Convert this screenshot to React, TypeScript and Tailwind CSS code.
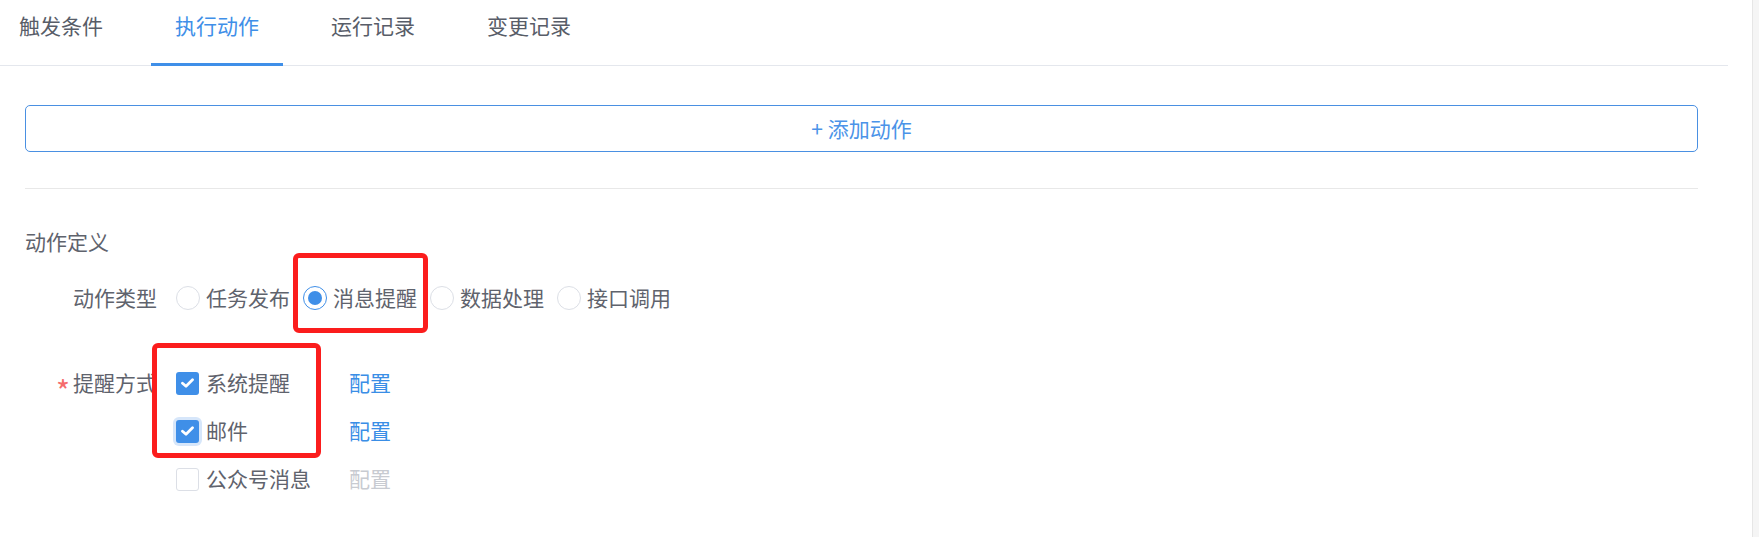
import { useState } from "react";

const tabs = ["触发条件", "执行动作", "运行记录", "变更记录"];
const actionTypes = ["任务发布", "消息提醒", "数据处理", "接口调用"];

function Radio({ label, checked }: { label: string; checked: boolean }) {
  return (
    <label className="mr-[13px] flex items-center">
      <span
        className={
          checked
            ? "flex h-[24px] w-[24px] items-center justify-center rounded-full border border-[#3f8fe8] bg-white"
            : "h-[24px] w-[24px] rounded-full border border-[#dcdfe6] bg-white"
        }
      >
        {checked && <span className="h-[14px] w-[14px] rounded-full bg-[#3f8fe8]" />}
      </span>
      <span className="ml-[6px] text-[#5f636d]">{label}</span>
    </label>
  );
}

function Check({ checked, focused }: { checked: boolean; focused?: boolean }) {
  if (!checked) {
    return <span className="h-[23px] w-[23px] rounded-[3px] border border-[#dcdfe6] bg-white" />;
  }
  return (
    <span
      className={
        focused
          ? "flex h-[23px] w-[23px] items-center justify-center rounded-[3px] bg-[#3f8fe8] shadow-[0_0_0_3px_#d6e6fa]"
          : "flex h-[23px] w-[23px] items-center justify-center rounded-[3px] bg-[#3f8fe8]"
      }
    >
      <svg width="13" height="10" viewBox="0 0 13 10" fill="none">
        <path d="M1.5 5.2 L5 8.2 L11.5 1.8" stroke="white" strokeWidth="2.8" strokeLinecap="round" strokeLinejoin="round" />
      </svg>
    </span>
  );
}

export default function App() {
  const [active] = useState(1);
  const notices = [
    { label: "系统提醒", checked: true, focused: false },
    { label: "邮件", checked: true, focused: true },
    { label: "公众号消息", checked: false, focused: false },
  ];

  return (
    <div className="flex h-[537px] w-[1759px] bg-white font-['Noto_Sans_CJK_SC','Liberation_Sans',sans-serif] text-[21px] text-[#606266]">
      <div className="relative flex-1">
        {/* tabs */}
        <div className="mr-[24px] h-[66px] border-b border-[#e4e7ed]">
          <div className="-ml-[5px] flex gap-[24px]">
            {tabs.map((t, i) => (
              <div
                key={t}
                className={
                  i === active
                    ? "relative flex h-[65px] w-[132px] items-center justify-center pb-[14px] text-[#3f8fe8]"
                    : "relative flex h-[65px] w-[132px] items-center justify-center pb-[14px] text-[#585d68]"
                }
              >
                {t}
                {i === active && <span className="absolute bottom-[-1px] left-0 h-[3px] w-full bg-[#3f8fe8]" />}
              </div>
            ))}
          </div>
        </div>

        <div className="pl-[25px] pr-[54px]">
          <button className="mt-[39px] flex h-[47px] w-full items-center justify-center rounded-[5px] border border-[#4a90e2] bg-white text-[#4b93e8]">
            + 添加动作
          </button>
          <div className="mt-[36px] h-px bg-[#e8e8e8]" />

          <div className="mt-[37px] h-[30px] leading-[30px] text-[#5f636d]">动作定义</div>

          <div className="mt-[22px] flex h-[40px] items-center">
            <div className="w-[151px] pl-[48px] text-[#5f636d]">动作类型</div>
            {actionTypes.map((a, i) => (
              <Radio key={a} label={a} checked={i === 1} />
            ))}
          </div>

          <div className="mt-[41px] flex">
            <div className="flex h-[48px] w-[151px] items-center pl-[31px] text-[#5f636d]">
              <span className="relative top-[7px] w-[17px] text-[30px] leading-none text-[#f56c6c]">*</span>
              提醒方式
            </div>
            <div className="flex flex-col">
              {notices.map((n) => (
                <div key={n.label} className="flex h-[48px] items-center">
                  <div className="flex w-[173px] items-center">
                    <Check checked={n.checked} focused={n.focused} />
                    <span className="ml-[7px] text-[#5f636d]">{n.label}</span>
                  </div>
                  <span className={n.checked ? "text-[#3a8ee6]" : "text-[#c8cbd1]"}>配置</span>
                </div>
              ))}
            </div>
          </div>
        </div>

        {/* annotation boxes */}
        <div className="pointer-events-none absolute left-[293px] top-[253px] h-[80px] w-[135px] rounded-[6px] border-[5px] border-[#fb1d1d]" />
        <div className="pointer-events-none absolute left-[152px] top-[343px] h-[115px] w-[169px] rounded-[6px] border-[5px] border-[#fb1d1d]" />
      </div>
      <div className="w-[7px] border-l border-[#e6e6e6] bg-[#f5f5f5]" />
    </div>
  );
}
